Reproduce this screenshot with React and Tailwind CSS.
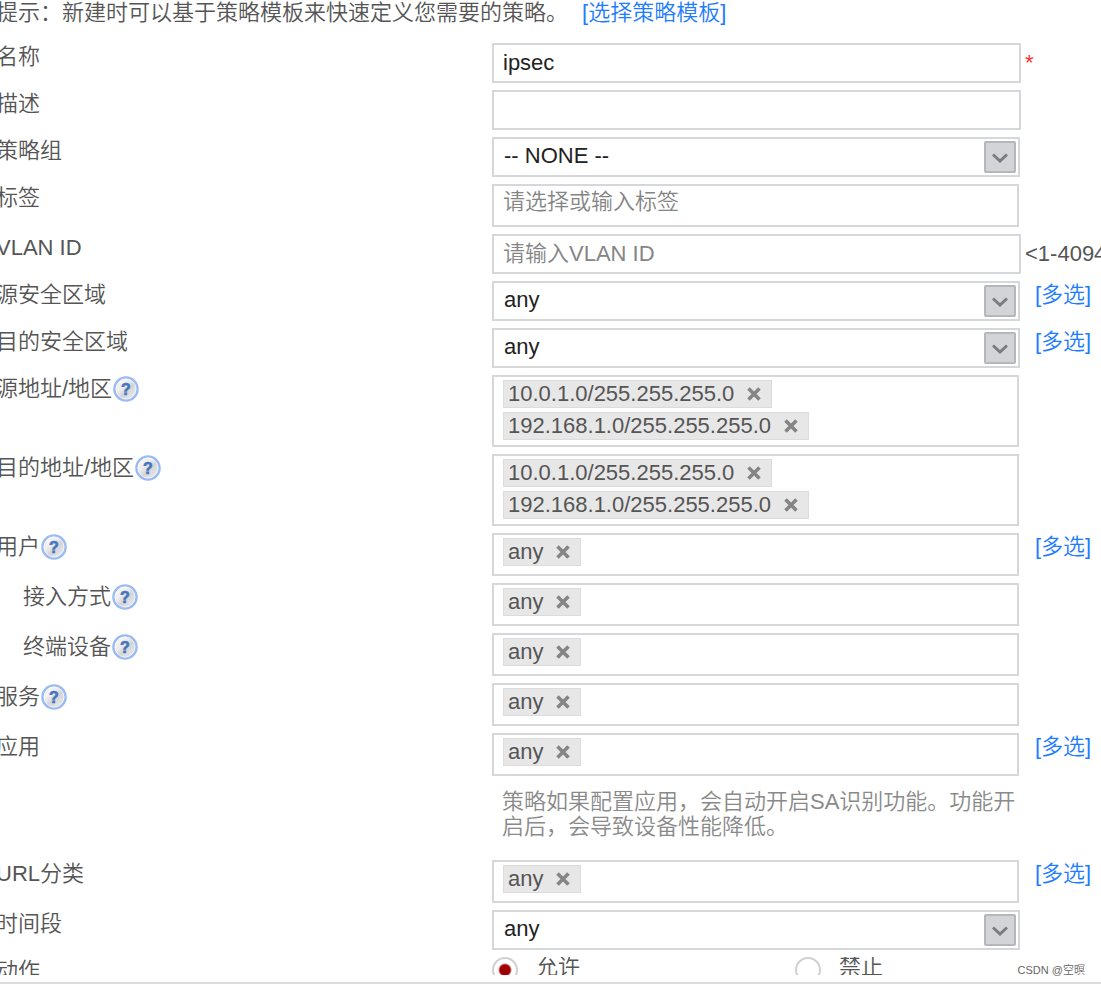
import { useState } from 'react';

const HelpIcon = () => (
  <svg viewBox="0 0 26 26" className="h-[26px] w-[26px] shrink-0" aria-hidden="true">
    <defs>
      <linearGradient id="help-fill" x1="0" y1="0" x2="1" y2="1">
        <stop offset="0" stopColor="#ffffff" />
        <stop offset="0.4" stopColor="#ececee" />
        <stop offset="0.55" stopColor="#d3d4d8" />
        <stop offset="1" stopColor="#f4f4f6" />
      </linearGradient>
    </defs>
    <circle cx="13" cy="13" r="11.6" fill="url(#help-fill)" stroke="#9cbbf2" strokeWidth="2.4" />
    <circle cx="13" cy="13" r="10" fill="none" stroke="#ffffff" strokeOpacity="0.6" />
    <text x="13" y="19" textAnchor="middle" fontSize="16" fontWeight="700" fill="#4676bd" stroke="#4676bd" strokeWidth="0.6">
      ?
    </text>
  </svg>
);

const Row = ({ id, label, help, indent, extra, children }) => (
  <div className="grid grid-cols-[minmax(0,492fr)_minmax(0,529fr)_minmax(0,80fr)] items-start">
    <div className={indent ? '-ml-1 flex items-center pl-[27px]' : '-ml-1 flex items-center'}>
      <label id={`${id}-label`} htmlFor={id} className="leading-7">{label}</label>
      {help && (
        <button type="button" aria-label="帮助" className="ml-px h-[26px]">
          <HelpIcon />
        </button>
      )}
    </div>
    <div>{children}</div>
    <div className="overflow-hidden whitespace-nowrap">{extra}</div>
  </div>
);

const TextField = ({ id, value, placeholder }) => (
  <input
    id={id}
    type="text"
    defaultValue={value}
    placeholder={placeholder}
    className="block h-10 w-full border-2 border-[#d6d7db] bg-white px-[9px] text-[#222] placeholder:text-[#858585] outline-none"
  />
);

const SelectField = ({ id, options }) => (
  <div className="relative mr-px">
    <select
      id={id}
      className="block h-10 w-full appearance-none border-2 border-[#d6d7db] bg-white pr-10 pb-[3px] pl-[10px] text-[#222] outline-none"
    >
      {options.map((option) => (
        <option key={option}>{option}</option>
      ))}
    </select>
    <span className="pointer-events-none absolute top-1 right-1 flex h-8 w-8 items-center justify-center rounded-xs border-2 border-[#b4b7bb] bg-[#d2d4d7]">
      <svg viewBox="0 0 16 10" className="mt-px h-[10px] w-4" fill="none" stroke="#7b7c7e" strokeWidth="3">
        <path d="M1 1.5 L8 8 L15 1.5" />
      </svg>
    </span>
  </div>
);

const TagField = ({ id, initial }) => {
  const [tags, setTags] = useState(initial);

  return (
    <div
      role="group"
      aria-labelledby={`${id}-label`}
      className="mr-[2px] flex min-h-[43px] flex-wrap content-start gap-1 border-2 border-[#d6d7db] bg-white pt-[3px] pr-2 pb-[5px] pl-[9px]"
    >
      {tags.map((tag) => (
        <span key={tag} className="flex h-7 items-center border border-[#dcdcdc] bg-[#e7e7e7] pr-[10px] pb-[2px] pl-1">
          {tag}
          <button
            type="button"
            aria-label={`删除 ${tag}`}
            onClick={() => setTags(tags.filter((item) => item !== tag))}
            className="ml-[13px]"
          >
            <svg viewBox="0 0 14 14" className="mt-px h-[14px] w-[14px]" stroke="#858585" strokeWidth="3.6">
              <path d="M1.5 1.5 L12.5 12.5 M12.5 1.5 L1.5 12.5" />
            </svg>
          </button>
        </span>
      ))}
    </div>
  );
};

const MultiLink = () => (
  <a href="#multi" className="ml-[14px] block leading-7 text-[#1f7cff]">[多选]</a>
);

const RadioOption = ({ value, label, checked }) => (
  <label className="flex items-start leading-5">
    <input
      type="radio"
      name="action"
      value={value}
      defaultChecked={checked}
      className="mr-[18px] h-[26px] w-[26px] shrink-0 appearance-none rounded-full border-2 border-[#d0d0d0] bg-white checked:bg-[radial-gradient(circle,#a00000_5px,transparent_7px)]"
    />
    {label}
  </label>
);

const ADDRESSES = ['10.0.1.0/255.255.255.0', '192.168.1.0/255.255.255.0'];

const App = () => (
  <main className="relative overflow-hidden bg-white font-['Liberation_Sans','Noto_Sans_CJK_SC',sans-serif] text-[22px] font-[350] text-[#555]">
    {/* Tip */}
    <p className="mb-[17px] -ml-1 leading-[26px] whitespace-nowrap">
      提示：新建时可以基于策略模板来快速定义您需要的策略。
      <a href="#template" className="ml-[14px] text-[#1f7cff]">[选择策略模板]</a>
    </p>

    {/* Policy form */}
    <form className="flex flex-col gap-[7px]">
      <Row id="name" label="名称" extra={<span className="ml-1 block leading-10 text-[#ff3030]">*</span>}>
        <TextField id="name" value="ipsec" />
      </Row>
      <Row id="desc" label="描述">
        <TextField id="desc" />
      </Row>
      <Row id="group" label="策略组">
        <SelectField id="group" options={['-- NONE --']} />
      </Row>
      <Row id="tags" label="标签">
        <div className="mr-[2px] h-[43px] border-2 border-[#d6d7db] bg-white px-[9px]">
          <input
            id="tags"
            type="text"
            placeholder="请选择或输入标签"
            className="block h-[30px] w-full placeholder:text-[#858585] outline-none"
          />
        </div>
      </Row>
      <Row id="vlan" label="VLAN ID" extra={<span className="ml-1 block leading-10">&lt;1-4094&gt;</span>}>
        <TextField id="vlan" placeholder="请输入VLAN ID" />
      </Row>
      <Row id="src-zone" label="源安全区域" extra={<MultiLink />}>
        <SelectField id="src-zone" options={['any']} />
      </Row>
      <Row id="dst-zone" label="目的安全区域" extra={<MultiLink />}>
        <SelectField id="dst-zone" options={['any']} />
      </Row>
      <Row id="src-addr" label="源地址/地区" help>
        <TagField id="src-addr" initial={ADDRESSES} />
      </Row>
      <Row id="dst-addr" label="目的地址/地区" help>
        <TagField id="dst-addr" initial={ADDRESSES} />
      </Row>
      <Row id="user" label="用户" help extra={<MultiLink />}>
        <TagField id="user" initial={['any']} />
      </Row>
      <Row id="access" label="接入方式" help indent>
        <TagField id="access" initial={['any']} />
      </Row>
      <Row id="device" label="终端设备" help indent>
        <TagField id="device" initial={['any']} />
      </Row>
      <Row id="service" label="服务" help>
        <TagField id="service" initial={['any']} />
      </Row>
      <Row id="app" label="应用" extra={<MultiLink />}>
        <TagField id="app" initial={['any']} />
        <p className="mt-[13px] mb-[14px] ml-[10px] leading-[25px] text-[#8a8a8a]">
          策略如果配置应用，会自动开启SA识别功能。功能开启后，会导致设备性能降低。
        </p>
      </Row>
      <Row id="url" label="URL分类" extra={<MultiLink />}>
        <TagField id="url" initial={['any']} />
      </Row>
      <Row id="time" label="时间段">
        <SelectField id="time" options={['any']} />
      </Row>
      <div className="h-[18px] overflow-hidden">
        <Row id="action" label="动作">
          <div role="radiogroup" aria-labelledby="action-label" className="grid grid-cols-[303fr_226fr]">
            <RadioOption value="permit" label="允许" checked />
            <RadioOption value="deny" label="禁止" />
          </div>
        </Row>
      </div>
    </form>

    <div className="mt-[7px] border-t-2 border-[#dcdcdc] pb-px"></div>
    <span className="absolute right-4 bottom-[7px] text-[11px] leading-4 text-[#666]">CSDN @空暝</span>
  </main>
);

export default App;
